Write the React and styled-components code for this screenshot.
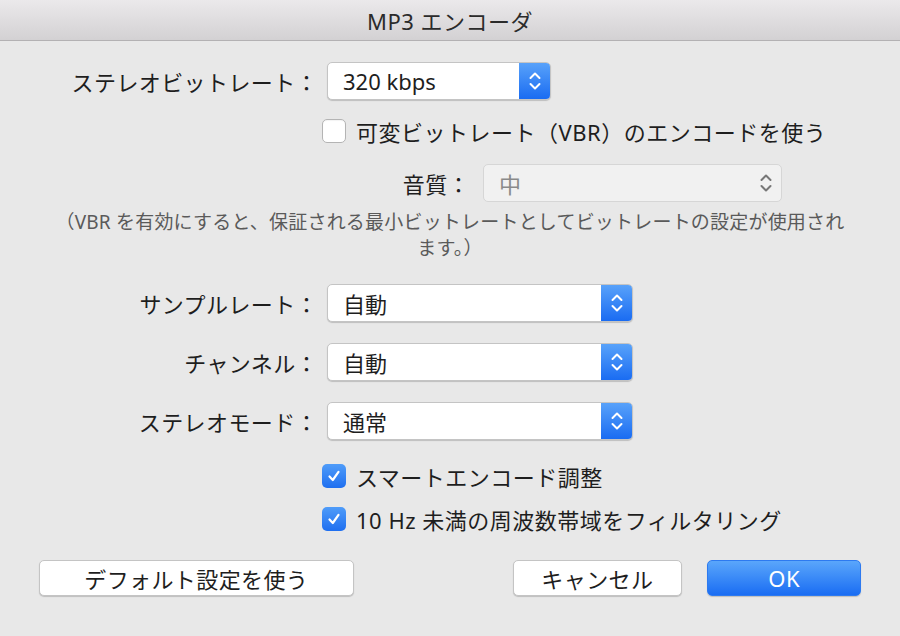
import React from 'react';
import styled, { createGlobalStyle } from 'styled-components';

const GlobalStyle = createGlobalStyle`
  html, body {
    margin: 0;
    padding: 0;
    background: #e8e8e8;
  }
  body {
    font-family: "Noto Sans", "Noto Sans CJK JP", sans-serif;
    color: #222;
  }
`

const Window = styled.div`
  width: 900px;
  height: 636px;
  background: #e8e8e8;
  display: flex;
  flex-direction: column;
  overflow: hidden;
`

const TitleBar = styled.div`
  height: 40px;
  flex: none;
  display: flex;
  align-items: center;
  justify-content: center;
  background: linear-gradient(#ebe9eb, #d3d1d3);
  border-bottom: 1px solid #b3b1b3;
  font-size: 22px;
  letter-spacing: 0.5px;
  color: #2b2b2b;
`

const Body = styled.div`
  display: flex;
  flex-direction: column;
`

const Row = styled.div`
  display: flex;
  align-items: center;
  height: ${p => p.h || 38}px;
  margin-top: ${p => p.mt || 0}px;
`

const Label = styled.div`
  width: ${p => p.w}px;
  flex: none;
  text-align: right;
  font-size: 22px;
  letter-spacing: 0.4px;
  padding-right: ${p => p.pr || 9}px;
  box-sizing: border-box;
  white-space: nowrap;
  color: #1e1e1e;
`

const Popup = styled.div`
  width: ${p => p.w}px;
  height: 38px;
  box-sizing: border-box;
  display: flex;
  align-items: stretch;
  border-radius: 5px;
  background: ${p => p.disabled ? '#f1f1f1' : '#fff'};
  border: 1px solid ${p => p.disabled ? '#d6d6d6' : '#c4c4c4'};
  box-shadow: ${p => p.disabled ? 'none' : '0 1px 1px rgba(0,0,0,0.18)'};
  overflow: hidden;
`

const PopupText = styled.div`
  flex: 1;
  display: flex;
  align-items: center;
  padding-left: 15px;
  font-size: 22px;
  color: ${p => p.disabled ? '#8a8a8a' : '#1e1e1e'};
`

const Stepper = styled.div`
  width: 31px;
  flex: none;
  display: flex;
  align-items: center;
  justify-content: center;
  background: ${p => p.disabled ? 'transparent' : 'linear-gradient(#58a2fa, #1a6cf2)'};
`

const CheckRow = styled.label`
  display: flex;
  align-items: center;
  gap: 10px;
  padding-left: 322px;
  height: 24px;
  margin-top: ${p => p.mt || 0}px;
  font-size: 22px;
  letter-spacing: 0.5px;
  color: #1e1e1e;
  white-space: nowrap;
`

const Box = styled.span`
  width: 24px;
  height: 24px;
  box-sizing: border-box;
  border-radius: 5px;
  display: flex;
  align-items: center;
  justify-content: center;
  flex: none;
  background: ${p => p.checked ? 'linear-gradient(#4f9cf9, #1f6ff0)' : '#fff'};
  border: ${p => p.checked ? 'none' : '1px solid #b4b4b4'};
  box-shadow: ${p => p.checked ? 'none' : 'inset 0 1px 1px rgba(0,0,0,0.05)'};
`

const Note = styled.div`
  margin-top: 8px;
  text-align: center;
  font-size: 19px;
  letter-spacing: 0.2px;
  line-height: 26px;
  color: #5a5a5a;
  white-space: nowrap;
`

const ButtonBar = styled.div`
  display: flex;
  align-items: center;
  margin-top: 29px;
  padding: 0 39px;
`

const Button = styled.div`
  width: ${p => p.w}px;
  height: 36px;
  box-sizing: border-box;
  display: flex;
  align-items: center;
  justify-content: center;
  border-radius: 5px;
  font-size: 22px;
  letter-spacing: 0.4px;
  margin-left: ${p => p.ml || 0}px;
  color: ${p => p.primary ? '#fff' : '#1e1e1e'};
  background: ${p => p.primary ? 'linear-gradient(#5aa6fb, #1a6df3)' : '#fff'};
  border: 1px solid ${p => p.primary ? '#2d7af0' : '#c4c4c4'};
  box-shadow: 0 1px 1px rgba(0,0,0,0.18);
`

const Chevrons = ({ color }) => (
  <svg width="14" height="22" viewBox="0 0 14 22" fill="none" stroke={color} strokeWidth="2" strokeLinecap="round" strokeLinejoin="round">
    <path d="M2.5 8 L7 3.5 L11.5 8" />
    <path d="M2.5 14 L7 18.5 L11.5 14" />
  </svg>
)

const Check = () => (
  <svg width="16" height="16" viewBox="0 0 16 16" fill="none" stroke="#fff" strokeWidth="2.2" strokeLinecap="round" strokeLinejoin="round">
    <path d="M3.5 8.5 L6.8 12 L12.5 3.8" />
  </svg>
)

const Select = ({ w, value, disabled }) => (
  <Popup w={w} disabled={disabled}>
    <PopupText disabled={disabled}>{value}</PopupText>
    <Stepper disabled={disabled}>
      <Chevrons color={disabled ? '#777' : '#fff'} />
    </Stepper>
  </Popup>
)

const Checkbox = ({ checked, children, mt }) => (
  <CheckRow mt={mt}>
    <Box checked={checked}>{checked && <Check />}</Box>
    {children}
  </CheckRow>
)

export default function App() {
  return (
    <Window>
      <GlobalStyle />
      <TitleBar>MP3 エンコーダ</TitleBar>
      <Body>
        <Row mt={21}>
          <Label w={327}>ステレオビットレート：</Label>
          <Select w={224} value="320 kbps" />
        </Row>
        <Checkbox mt={19}>可変ビットレート（VBR）のエンコードを使う</Checkbox>
        <Row mt={21} h={37}>
          <Label w={483} pr={13}>音質：</Label>
          <Select w={299} value="中" disabled />
        </Row>
        <Note>
          （VBR を有効にすると、保証される最小ビットレートとしてビットレートの設定が使用され<br />
          ます。）
        </Note>
        <Row mt={23}>
          <Label w={327}>サンプルレート：</Label>
          <Select w={306} value="自動" />
        </Row>
        <Row mt={21}>
          <Label w={327}>チャンネル：</Label>
          <Select w={306} value="自動" />
        </Row>
        <Row mt={21}>
          <Label w={327}>ステレオモード：</Label>
          <Select w={306} value="通常" />
        </Row>
        <Checkbox checked mt={24}>スマートエンコード調整</Checkbox>
        <Checkbox checked mt={19}>10 Hz 未満の周波数帯域をフィルタリング</Checkbox>
        <ButtonBar>
          <Button w={315}>デフォルト設定を使う</Button>
          <Button w={170} ml={159}>キャンセル</Button>
          <Button w={154} ml={25} primary>OK</Button>
        </ButtonBar>
      </Body>
    </Window>
  );
}
